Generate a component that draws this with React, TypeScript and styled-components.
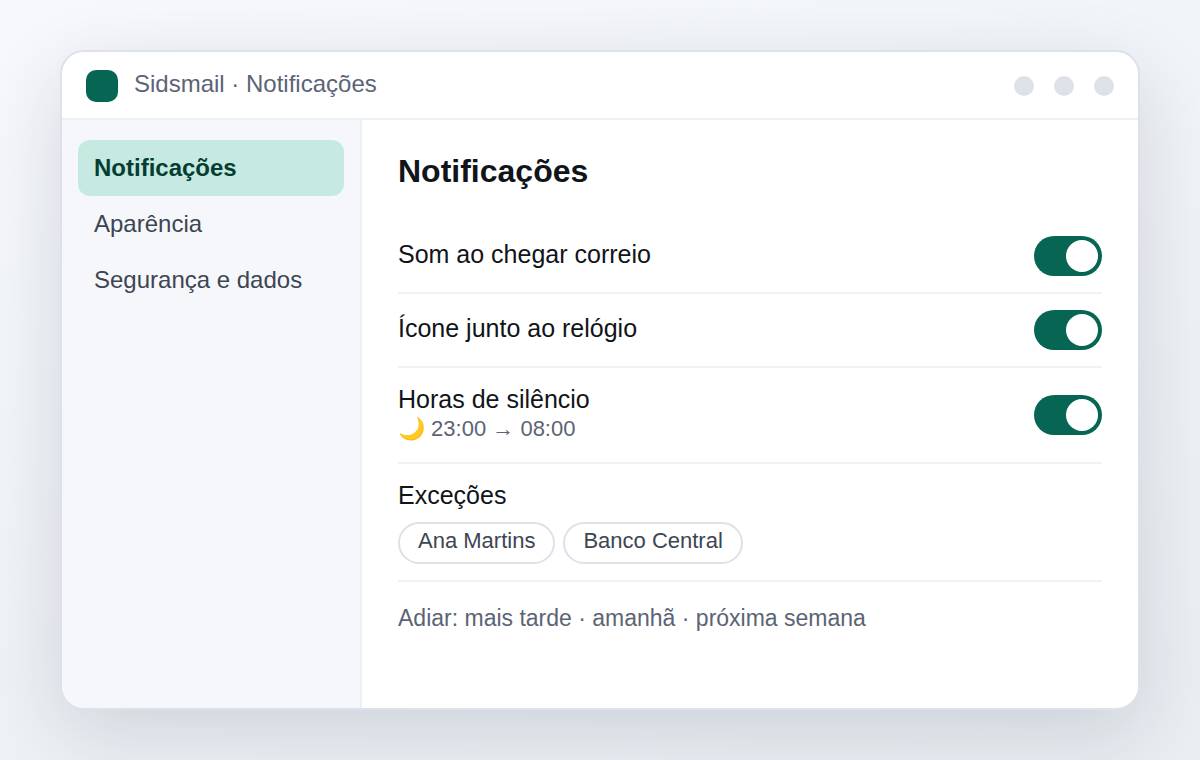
import React, { useState } from "react";
import styled, { createGlobalStyle } from "styled-components";

const GlobalStyle = createGlobalStyle`
  *, *::before, *::after { box-sizing: border-box; }
  body {
    margin: 0;
    font-family: "Liberation Sans", Arial, sans-serif;
    color: #111418;
  }
  h1, p, ul { margin: 0; padding: 0; }
  ul { list-style: none; }
`;

const Page = styled.div`
  min-height: 100vh;
  display: flex;
  padding: 50px 60px;
  background: linear-gradient(160deg, #f6f8fc, #e9eef2);
`;

const Window = styled.div`
  flex: 1;
  min-width: 0;
  display: flex;
  flex-direction: column;
  overflow: hidden;
  background: #fff;
  border: 2px solid #dde2ea;
  border-radius: 24px;
  box-shadow: 0 24px 80px rgba(20, 30, 50, 0.14);
`;

const TitleBar = styled.header`
  display: flex;
  align-items: center;
  gap: 16px;
  padding: 18px 24px 16px;
  border-bottom: 2px solid #edf0f5;
`;

const Logo = styled.span`
  width: 32px;
  height: 32px;
  border-radius: 10px;
  background: #076653;
`;

const AppName = styled.span`
  flex: 1;
  padding-bottom: 4px;
  font-size: 24px;
  line-height: 28px;
  color: #5b6475;
`;

const Dots = styled.div`
  display: flex;
  gap: 20px;
`;

const Dot = styled.span`
  width: 20px;
  height: 20px;
  border-radius: 50%;
  background: #dde2e9;
`;

const Body = styled.div`
  flex: 1;
  display: flex;
`;

const Sidebar = styled.nav`
  flex: 0 0 300px;
  padding: 20px 16px;
  background: #f5f7fb;
  border-right: 2px solid #edf0f5;
`;

const NavLink = styled.a<{ $active?: boolean }>`
  display: block;
  padding: 14px 16px;
  border-radius: 12px;
  font-size: 24px;
  line-height: 28px;
  text-decoration: none;
  font-weight: ${(p) => (p.$active ? 700 : 400)};
  color: ${(p) => (p.$active ? "#053d33" : "#3d4552")};
  background: ${(p) => (p.$active ? "#c6eae1" : "transparent")};
`;

const Main = styled.main`
  flex: 1;
  min-width: 0;
  padding: 32px 36px;
`;

const Heading = styled.h1`
  padding-bottom: 30px;
  font-size: 32px;
  line-height: 38px;
`;

const Row = styled.section`
  display: flex;
  align-items: center;
  justify-content: space-between;
  gap: 16px;
  padding: 16px 0;
  border-bottom: 2px solid #eff1f5;
`;

const Label = styled.label`
  display: block;
  padding-bottom: 4px;
  font-size: 25px;
  line-height: 30px;
`;

const Hint = styled.p`
  padding-bottom: 6px;
  font-size: 22px;
  line-height: 22px;
  color: #5b6475;
`;

const Switch = styled.input`
  appearance: none;
  flex: none;
  width: 68px;
  height: 40px;
  margin: 0;
  padding: 4px;
  display: flex;
  justify-content: flex-start;
  border-radius: 20px;
  background: #c3cad4;
  cursor: pointer;

  &::before {
    content: "";
    width: 32px;
    height: 32px;
    border-radius: 50%;
    background: #fff;
  }
  &:checked {
    justify-content: flex-end;
    background: #076653;
  }
`;

const Chips = styled.ul`
  display: flex;
  flex-wrap: wrap;
  gap: 8px;
  padding-top: 8px;
`;

const Chip = styled.button`
  display: block;
  height: 42px;
  padding: 0 18px 4px;
  border: 2px solid #dde2e9;
  border-radius: 21px;
  background: #fff;
  font: 22px/26px "Liberation Sans", Arial, sans-serif;
  color: #3d4552;
  cursor: pointer;
`;

const Snooze = styled.p`
  padding-top: 22px;
  font-size: 23px;
  line-height: 28px;
  color: #5b6475;
`;

const sections = ["Notificações", "Aparência", "Segurança e dados"];
const settings = [
  { id: "som", label: "Som ao chegar correio" },
  { id: "icone", label: "Ícone junto ao relógio" },
  { id: "silencio", label: "Horas de silêncio", hint: "🌙 23:00 → 08:00" },
];
const exceptions = ["Ana Martins", "Banco Central"];

function Setting({ id, label, hint }: { id: string; label: string; hint?: string }) {
  const [on, setOn] = useState(true);
  return (
    <Row>
      <div>
        <Label htmlFor={id}>{label}</Label>
        {hint && <Hint>{hint}</Hint>}
      </div>
      <Switch id={id} type="checkbox" role="switch" checked={on} onChange={() => setOn(!on)} />
    </Row>
  );
}

export default function App() {
  return (
    <>
      <GlobalStyle />
      <Page>
        <Window>
          <TitleBar>
            <Logo />
            <AppName>Sidsmail · Notificações</AppName>
            <Dots>
              <Dot />
              <Dot />
              <Dot />
            </Dots>
          </TitleBar>
          <Body>
            <Sidebar>
              {sections.map((name, i) => (
                <NavLink key={name} href="#" $active={i === 0}>
                  {name}
                </NavLink>
              ))}
            </Sidebar>
            <Main>
              <Heading>Notificações</Heading>
              {settings.map((s) => (
                <Setting key={s.id} {...s} />
              ))}
              <Row>
                <div>
                  <Label as="p">Exceções</Label>
                  <Chips>
                    {exceptions.map((name) => (
                      <li key={name}>
                        <Chip type="button">{name}</Chip>
                      </li>
                    ))}
                  </Chips>
                </div>
              </Row>
              <Snooze>Adiar: mais tarde · amanhã · próxima semana</Snooze>
            </Main>
          </Body>
        </Window>
      </Page>
    </>
  );
}
